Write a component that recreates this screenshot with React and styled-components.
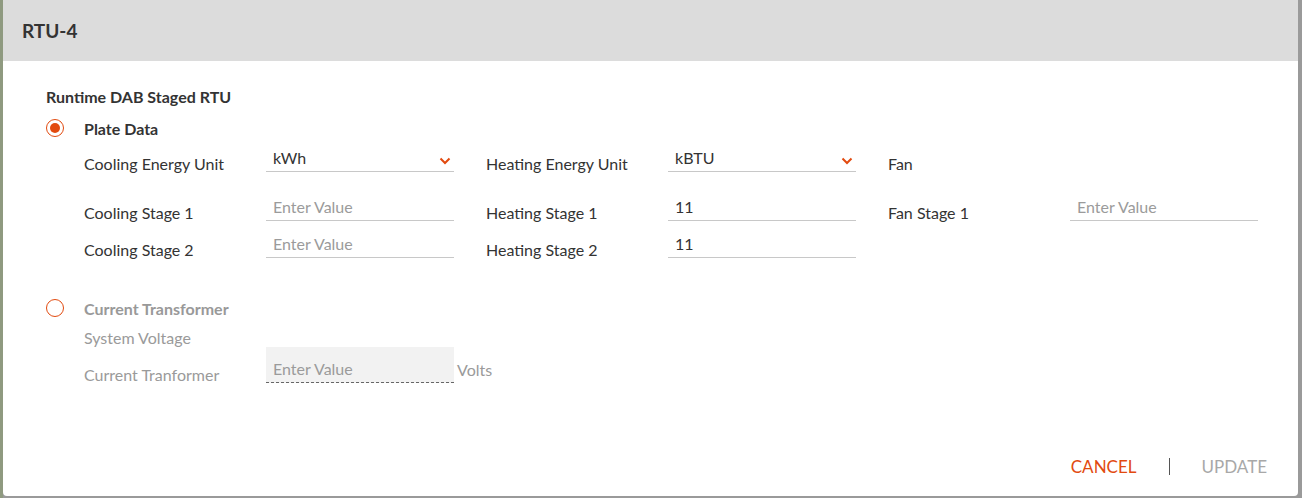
import React from 'react';
import styled, { createGlobalStyle } from 'styled-components';

const GlobalStyle = createGlobalStyle`
  html, body {
    margin: 0;
    padding: 0;
    background: #9a9a9a;
    font-family: 'Lato', 'Open Sans', sans-serif;
  }
`;

const ORANGE = '#e24a0f';

const Backdrop = styled.div`
  width: 1302px;
  height: 498px;
  padding: 0 4px 2px 3px;
  box-sizing: border-box;
  background: linear-gradient(to right, #8f9a80 0, #8f9a80 3px, #9a9a9a 3px);
`;

const Dialog = styled.div`
  display: flex;
  flex-direction: column;
  height: 496px;
  background: #fff;
  border-radius: 0 0 4px 4px;
  overflow: hidden;
`;

const Header = styled.div`
  display: flex;
  align-items: center;
  flex-shrink: 0;
  height: 61px;
  padding: 0 19px;
  background: #dcdcdc;
  color: #333;
  font-size: 19px;
  font-weight: 700;
`;

const Body = styled.div`
  flex: 1;
  padding: 25px 0 0 43px;
`;

const Title = styled.div`
  font-size: 16px;
  font-weight: 700;
  color: #333;
  line-height: 22px;
`;

const OptionRow = styled.div`
  display: flex;
  align-items: center;
  height: 24px;
  margin-top: ${p => p.$top}px;
`;

const Radio = styled.span`
  position: relative;
  width: 18px;
  height: 18px;
  box-sizing: border-box;
  border: 1.5px solid ${ORANGE};
  border-radius: 50%;
  margin-right: 20px;
  &::after {
    content: '';
    display: ${p => (p.$checked ? 'block' : 'none')};
    position: absolute;
    left: 50%;
    top: 50%;
    width: 10px;
    height: 10px;
    margin: -5px 0 0 -5px;
    border-radius: 50%;
    background: ${ORANGE};
  }
`;

const OptionLabel = styled.span`
  font-size: 16px;
  font-weight: 700;
  color: ${p => (p.$muted ? '#999' : '#333')};
`;

const Grid = styled.div`
  padding-left: 38px;
`;

const Row = styled.div`
  display: flex;
  gap: 32px;
  margin-top: ${p => p.$top}px;
`;

const Field = styled.div`
  display: flex;
  align-items: flex-end;
  width: 370px;
`;

const Label = styled.div`
  width: 182px;
  flex-shrink: 0;
  font-size: 16px;
  line-height: 22px;
  color: ${p => (p.$muted ? '#9a9a9a' : '#333')};
`;

const InputBox = styled.div`
  display: flex;
  align-items: flex-end;
  justify-content: space-between;
  flex-shrink: 0;
  width: 188px;
  height: ${p => (p.$tall ? 36 : 26)}px;
  box-sizing: border-box;
  margin-bottom: 3px;
  padding: 0 3px 2px 7px;
  background: ${p => (p.$disabled ? '#f2f2f2' : 'transparent')};
  border-bottom: 1px ${p => (p.$disabled ? 'dashed #666' : 'solid #c8c8c8')};
  font-size: 16px;
  line-height: 22px;
  color: ${p => (p.$placeholder ? '#9b9b9b' : '#333')};
`;

const Chevron = styled.svg`
  width: 12px;
  height: 8px;
  margin-bottom: 4px;
`;

const Unit = styled.span`
  margin: 0 0 5px 3px;
  font-size: 16px;
  line-height: 22px;
  color: #9a9a9a;
`;

const Footer = styled.div`
  display: flex;
  align-items: center;
  justify-content: flex-end;
  flex-shrink: 0;
  height: 60px;
  padding-right: 31px;
`;

const ActionButton = styled.button`
  border: 0;
  background: none;
  padding: 0;
  font-family: inherit;
  font-size: 17px;
  color: ${p => (p.$primary ? ORANGE : '#a8a8a8')};
  cursor: pointer;
`;

const Divider = styled.span`
  width: 1px;
  height: 17px;
  background: #555;
  margin: 0 32px;
`;

const Select = ({ value }) => (
  <InputBox>
    <span>{value}</span>
    <Chevron viewBox="0 0 12 8">
      <path d="M1.5 1.5 L6 6 L10.5 1.5" fill="none" stroke={ORANGE} strokeWidth="2" />
    </Chevron>
  </InputBox>
);

const Input = ({ value }) => (
  <InputBox $placeholder={!value}>{value || 'Enter Value'}</InputBox>
);

export default function App() {
  return (
    <>
      <GlobalStyle />
      <Backdrop>
        <Dialog>
          <Header>RTU-4</Header>
          <Body>
            <Title>Runtime DAB Staged RTU</Title>
            <OptionRow $top={8}>
              <Radio $checked />
              <OptionLabel>Plate Data</OptionLabel>
            </OptionRow>
            <Grid>
              <Row $top={6}>
                <Field>
                  <Label>Cooling Energy Unit</Label>
                  <Select value="kWh" />
                </Field>
                <Field>
                  <Label>Heating Energy Unit</Label>
                  <Select value="kBTU" />
                </Field>
                <Field>
                  <Label>Fan</Label>
                </Field>
              </Row>
              <Row $top={20}>
                <Field>
                  <Label>Cooling Stage 1</Label>
                  <Input />
                </Field>
                <Field>
                  <Label>Heating Stage 1</Label>
                  <Input value="11" />
                </Field>
                <Field>
                  <Label>Fan Stage 1</Label>
                  <Input />
                </Field>
              </Row>
              <Row $top={8}>
                <Field>
                  <Label>Cooling Stage 2</Label>
                  <Input />
                </Field>
                <Field>
                  <Label>Heating Stage 2</Label>
                  <Input value="11" />
                </Field>
              </Row>
            </Grid>
            <OptionRow $top={35}>
              <Radio />
              <OptionLabel $muted>Current Transformer</OptionLabel>
            </OptionRow>
            <Grid>
              <Row $top={7}>
                <Label $muted>System Voltage</Label>
              </Row>
              <Row $top={-2}>
                <Field>
                  <Label $muted>Current Tranformer</Label>
                  <InputBox $tall $disabled $placeholder>
                    Enter Value
                  </InputBox>
                  <Unit>Volts</Unit>
                </Field>
              </Row>
            </Grid>
          </Body>
          <Footer>
            <ActionButton $primary>CANCEL</ActionButton>
            <Divider />
            <ActionButton>UPDATE</ActionButton>
          </Footer>
        </Dialog>
      </Backdrop>
    </>
  );
}
